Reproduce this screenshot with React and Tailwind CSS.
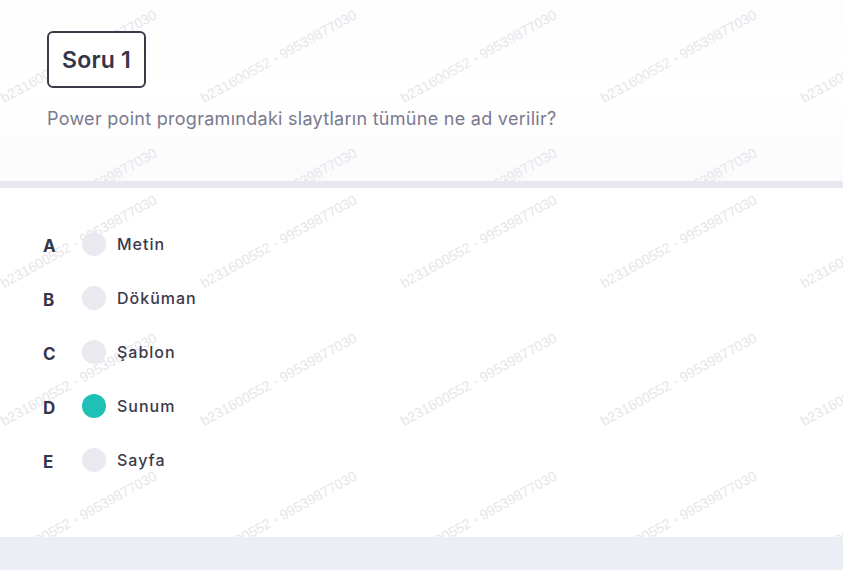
import React from 'react';

const WM_TEXT = 'b231600552 - 99539877030';

const options = [
  { key: 'A', label: 'Metin' },
  { key: 'B', label: 'Döküman' },
  { key: 'C', label: 'Şablon' },
  { key: 'D', label: 'Sunum', selected: true },
  { key: 'E', label: 'Sayfa' },
];

// watermark tiles, start points are the lower-left of the rotated text
function Watermark({ firstY, rows }) {
  const marks = [];
  for (let r = 0; r < rows; r++) {
    for (let c = 0; c < 5; c++) {
      marks.push({ x: 5 + c * 200, y: firstY + r * 138, id: `${r}-${c}` });
    }
  }
  return (
    <div className="pointer-events-none absolute inset-0 overflow-hidden">
      {marks.map((m) => (
        <span
          key={m.id}
          className="absolute origin-bottom-left rotate-[-29deg] whitespace-nowrap text-[14px] leading-[14px] text-[#e6e6ea]"
          style={{ left: m.x, top: m.y - 14, fontFamily: '"Liberation Sans", Arial, sans-serif' }}
        >
          {WM_TEXT}
        </span>
      ))}
    </div>
  );
}

function OptionRow({ option }) {
  return (
    <div className="flex h-[54px] items-center">
      <span className="mt-[4px] box-content w-[39px] pl-[43px] text-[17px] leading-[20px] font-bold text-[#36364a]">
        {option.key}
      </span>
      <span
        className={`h-[24px] w-[24px] shrink-0 rounded-full ${option.selected ? 'bg-[#1fc0b6]' : 'bg-[#e9eaf0]'}`}
      />
      <span className="ml-[11px] text-[16px] leading-[20px] font-medium tracking-[1px] text-[#3a3a4c]">
        {option.label}
      </span>
    </div>
  );
}

export default function App() {
  return (
    <div
      className="flex h-[570px] w-[843px] flex-col overflow-hidden bg-[#eceef6]"
      style={{ fontFamily: 'Inter, "Noto Sans", sans-serif' }}
    >
      <div className="relative h-[181px] shrink-0 bg-gradient-to-b from-[#fdfdfe] via-white to-[#fbfbfd]">
        <Watermark firstY={105} rows={2} />
        <div className="relative px-[47px] pt-[31px]">
          <div className="flex h-[57px] w-[99px] items-center justify-center rounded-[6px] border-2 border-[#3a3a48] bg-white">
            <span className="text-[23px] leading-[28px] font-semibold tracking-[0.2px] text-[#35354a]">Soru 1</span>
          </div>
          <p className="mt-[19px] text-[18px] leading-[24px] tracking-[0.28px] text-[#7a7a8e]">
            Power point programındaki slaytların tümüne ne ad verilir?
          </p>
        </div>
      </div>

      <div className="h-[7px] shrink-0 bg-[#e8e8f0]" />

      <div className="relative h-[349px] shrink-0 bg-white">
        <Watermark firstY={102} rows={4} />
        <div className="relative flex flex-col pt-[29px]">
          {options.map((o) => (
            <OptionRow key={o.key} option={o} />
          ))}
        </div>
      </div>

      <div className="flex-1 bg-[#eceef6]" />
    </div>
  );
}
